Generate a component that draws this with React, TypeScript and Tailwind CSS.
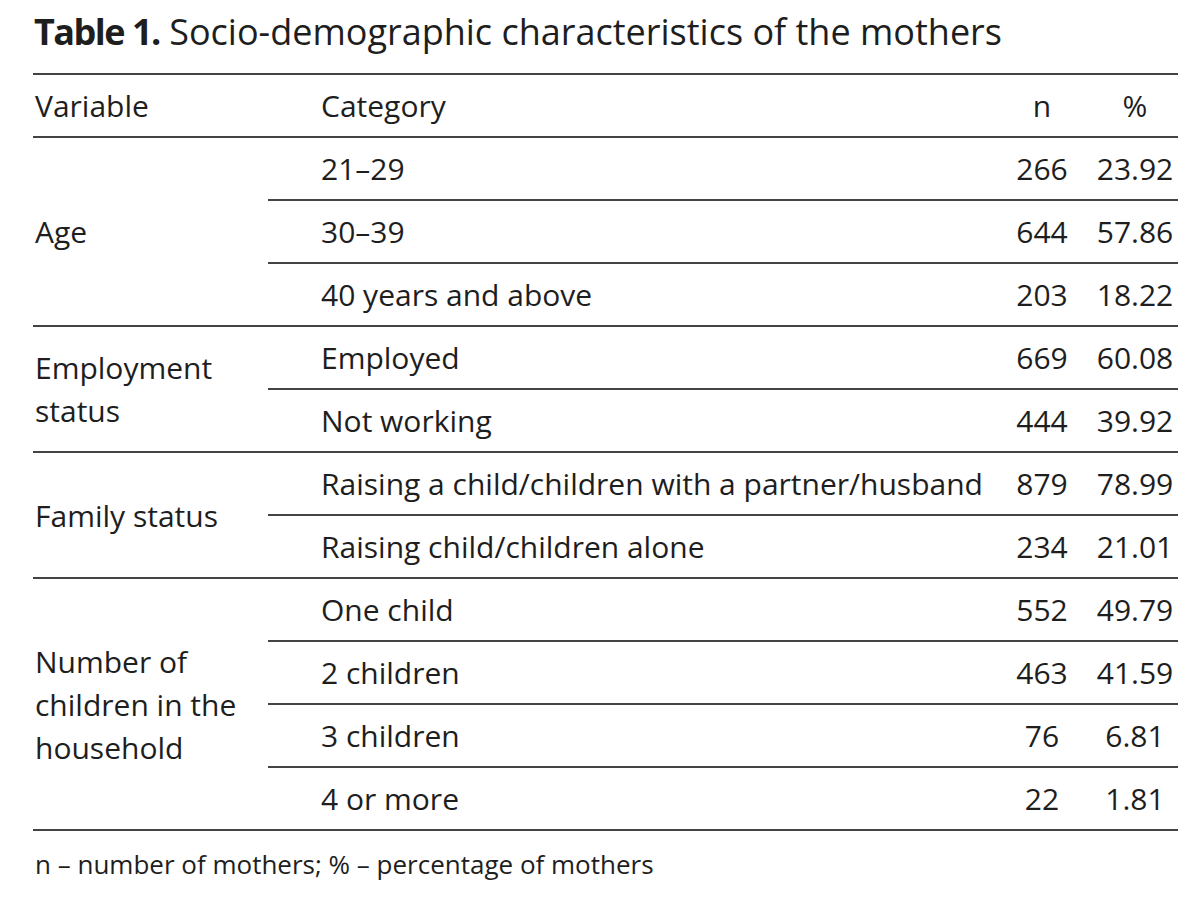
import React from "react";

type Group = {
  label: string[];
  rows: { category: string; n: string; pct: string }[];
};

const groups: Group[] = [
  {
    label: ["Age"],
    rows: [
      { category: "21–29", n: "266", pct: "23.92" },
      { category: "30–39", n: "644", pct: "57.86" },
      { category: "40 years and above", n: "203", pct: "18.22" },
    ],
  },
  {
    label: ["Employment", "status"],
    rows: [
      { category: "Employed", n: "669", pct: "60.08" },
      { category: "Not working", n: "444", pct: "39.92" },
    ],
  },
  {
    label: ["Family status"],
    rows: [
      { category: "Raising a child/children with a partner/husband", n: "879", pct: "78.99" },
      { category: "Raising child/children alone", n: "234", pct: "21.01" },
    ],
  },
  {
    label: ["Number of", "children in the", "household"],
    rows: [
      { category: "One child", n: "552", pct: "49.79" },
      { category: "2 children", n: "463", pct: "41.59" },
      { category: "3 children", n: "76", pct: "6.81" },
      { category: "4 or more", n: "22", pct: "1.81" },
    ],
  },
];

export default function App() {
  return (
    <div
      className="w-[1200px] h-[898px] bg-white text-[#1e1e1e]"
      style={{ fontFamily: '"Open Sans", "Noto Sans", sans-serif' }}
    >
      <div className="pl-[33px] pr-[22px] pt-[8px]">
        {/* title */}
        <div className="h-[65px] whitespace-nowrap pl-[1px] text-[36px] leading-[48px]">
          <span className="font-bold tracking-[-1.5px]">Table 1.</span> Socio-demographic characteristics of the mothers
        </div>

        <div className="border-t-2 border-[#444]">
          {/* header */}
          <div className="flex h-[63px] items-center border-b-2 border-[#444] text-[30px]">
            <div className="w-[235px] pl-[2px]">Variable</div>
            <div className="flex-1 pl-[53px]">Category</div>
            <div className="w-[100px] text-center">n</div>
            <div className="w-[86px] text-center">%</div>
          </div>

          {groups.map((g) => (
            <div key={g.label.join(" ")} className="flex border-b-2 border-[#444] text-[30px]">
              <div className="flex w-[235px] flex-col justify-center pl-[2px] leading-[43px]">
                {g.label.map((l) => (
                  <div key={l} className="whitespace-nowrap">{l}</div>
                ))}
              </div>
              <div className="flex-1">
                {g.rows.map((r, i) => (
                  <div
                    key={r.category}
                    className={
                      "flex items-center " +
                      (i < g.rows.length - 1 ? "h-[63px] border-b-2 border-[#444]" : "h-[61px]")
                    }
                  >
                    <div className="flex-1 whitespace-nowrap pl-[53px]">{r.category}</div>
                    <div className="w-[100px] text-center">{r.n}</div>
                    <div className="w-[86px] text-center">{r.pct}</div>
                  </div>
                ))}
              </div>
            </div>
          ))}
        </div>

        <div className="pl-[2px] pt-[14px] text-[26px]">
          n – number of mothers; % – percentage of mothers
        </div>
      </div>
    </div>
  );
}
